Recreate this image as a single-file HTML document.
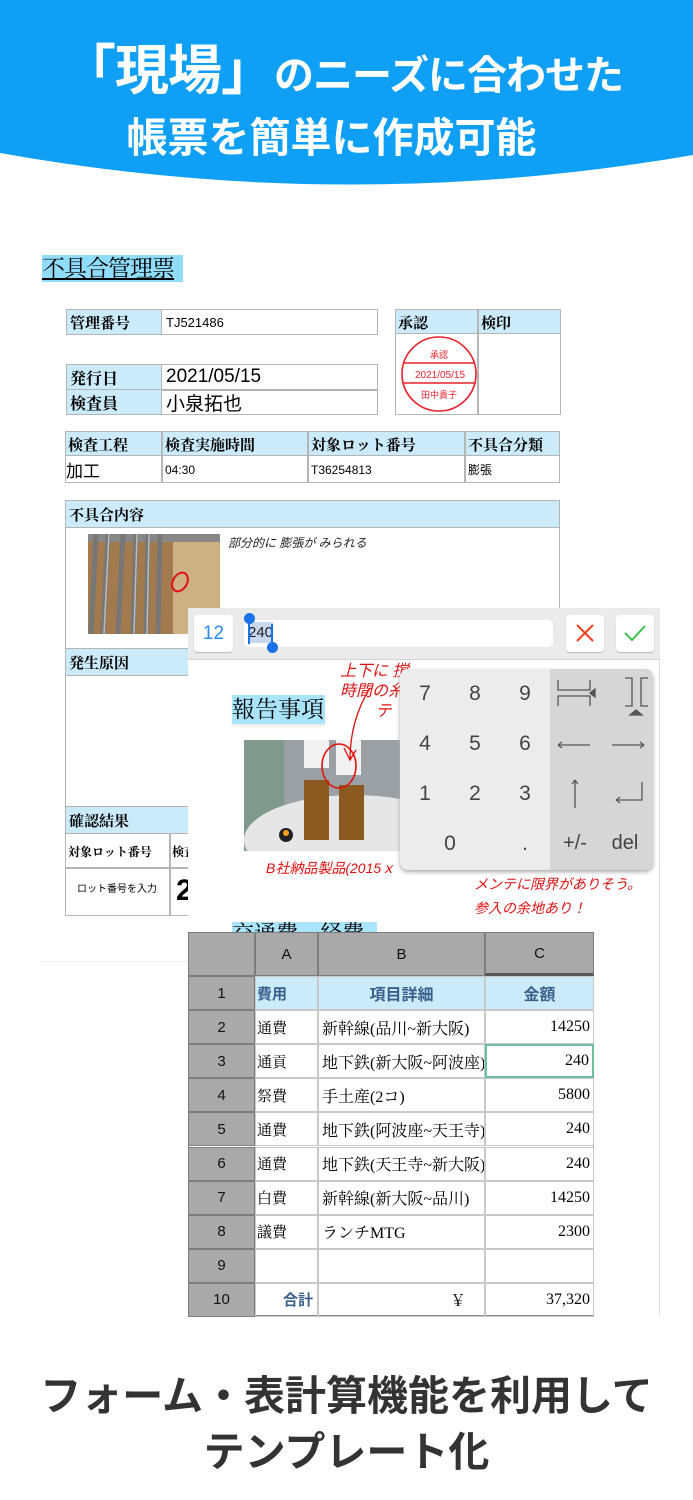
<!DOCTYPE html>
<html><head><meta charset="utf-8">
<style>
*{margin:0;padding:0;box-sizing:border-box}
body{width:693px;height:1500px;position:relative;background:#fff;overflow:hidden;font-family:"Liberation Sans","Noto Sans CJK JP",sans-serif}
.a{position:absolute}
.serif{font-family:"Liberation Serif","Noto Serif CJK SC",serif}
.hd{background:#cbebfb}
.b{border:1.5px solid #b5b5b5}
.c{position:absolute;display:flex;align-items:center;white-space:nowrap;overflow:hidden}
.k{position:absolute;width:50px;text-align:center;font-size:21px;color:#444}
.g{background:#a9a9a9;color:#111;border:1px solid #7d7d7d}
</style></head><body>
<svg class="a" style="left:0;top:0" width="693" height="200"><path d="M0 0H693V155Q346 215 0 153Z" fill="#0fa0f5"/></svg>
<div class="a" style="left:62px;top:26px;width:620px;color:#fff;font-weight:bold;white-space:nowrap;letter-spacing:-1px"><span style="font-size:54px">「現場」</span><span style="font-size:40px">のニーズに合わせた</span></div>
<div class="a" style="left:0;top:104px;width:693px;text-align:center;color:#fff;font-weight:bold;font-size:41px;padding-right:30px;white-space:nowrap">帳票を簡単に作成可能</div>

<div class="a serif" style="left:42px;top:255px;width:141px;height:27px;background:#8fdcfb;font-size:23px;line-height:27px;text-decoration:underline;white-space:nowrap;letter-spacing:-1px;overflow:hidden">不具合管理票</div>

<!-- table 1 -->
<div class="a b" style="left:66px;top:309px;width:312px;height:26px"></div>
<div class="c hd serif" style="left:67px;top:310px;width:95px;height:24px;font-weight:bold;font-size:15px;padding-left:3px;border-right:1.5px solid #b5b5b5">管理番号</div>
<div class="c" style="left:166px;top:310px;height:24px;font-size:13px">TJ521486</div>

<div class="a b" style="left:66px;top:364px;width:312px;height:51px"></div>
<div class="a" style="left:67px;top:389px;width:310px;height:1.5px;background:#b5b5b5"></div>
<div class="c hd serif" style="left:67px;top:365px;width:95px;height:24px;font-weight:bold;font-size:16px;padding-left:3px;border-right:1.5px solid #b5b5b5">発行日</div>
<div class="c hd serif" style="left:67px;top:390px;width:95px;height:24px;font-weight:bold;font-size:16px;padding-left:3px;border-right:1.5px solid #b5b5b5">検査員</div>
<div class="c" style="left:166px;top:365px;height:24px;font-size:19px">2021/05/15</div>
<div class="c" style="left:166px;top:390px;height:24px;font-size:19px">小泉拓也</div>

<div class="a b" style="left:395px;top:309px;width:166px;height:106px"></div>
<div class="a hd" style="left:396px;top:310px;width:164px;height:24px;border-bottom:1.5px solid #b5b5b5"></div>
<div class="a" style="left:477px;top:310px;width:1.5px;height:104px;background:#b5b5b5"></div>
<div class="c serif" style="left:398px;top:310px;height:24px;font-weight:bold;font-size:15px">承認</div>
<div class="c serif" style="left:481px;top:310px;height:24px;font-weight:bold;font-size:15px">検印</div>
<svg class="a" style="left:400px;top:336px" width="80" height="78"><ellipse cx="39" cy="38" rx="37" ry="37" fill="none" stroke="#e8202a" stroke-width="1.6"/><line x1="4" y1="27" x2="75" y2="27" stroke="#e8202a" stroke-width="1.4"/><line x1="3" y1="47" x2="75" y2="47" stroke="#e8202a" stroke-width="1.4"/><text x="39" y="22" font-size="9" fill="#e8202a" text-anchor="middle" font-family="Noto Sans CJK JP">承認</text><text x="40" y="42" font-size="10" fill="#e8202a" text-anchor="middle" font-family="Liberation Sans">2021/05/15</text><text x="39" y="62" font-size="9" fill="#e8202a" text-anchor="middle" font-family="Noto Sans CJK JP">田中貴子</text></svg>

<!-- table 3 -->
<div class="a b" style="left:65px;top:431px;width:495px;height:52px"></div>
<div class="a hd" style="left:66px;top:432px;width:493px;height:24px;border-bottom:1.5px solid #b5b5b5"></div>
<div class="a" style="left:161px;top:432px;width:1.5px;height:50px;background:#b5b5b5"></div>
<div class="a" style="left:307px;top:432px;width:1.5px;height:50px;background:#b5b5b5"></div>
<div class="a" style="left:464px;top:432px;width:1.5px;height:50px;background:#b5b5b5"></div>
<div class="c serif" style="left:68px;top:432px;height:24px;font-weight:bold;font-size:15px">検査工程</div>
<div class="c serif" style="left:165px;top:432px;height:24px;font-weight:bold;font-size:15px">検査実施時間</div>
<div class="c serif" style="left:311px;top:432px;height:24px;font-weight:bold;font-size:15px">対象ロット番号</div>
<div class="c serif" style="left:468px;top:432px;height:24px;font-weight:bold;font-size:15px">不具合分類</div>
<div class="c" style="left:66px;top:457px;height:25px;font-size:17px">加工</div>
<div class="c" style="left:165px;top:457px;height:25px;font-size:12px">04:30</div>
<div class="c" style="left:311px;top:457px;height:25px;font-size:12px">T36254813</div>
<div class="c" style="left:468px;top:457px;height:25px;font-size:12px">膨張</div>

<!-- 不具合内容 -->
<div class="a b" style="left:65px;top:500px;width:495px;height:416px"></div>
<div class="c hd serif" style="left:66px;top:501px;width:493px;height:27px;border-bottom:1.5px solid #b5b5b5;font-weight:bold;font-size:15px;padding-left:3px">不具合内容</div>
<svg class="a" style="left:88px;top:534px" width="132" height="100"><rect width="132" height="100" fill="#a27a4e"/><rect x="85" y="0" width="47" height="100" fill="#cdb184"/><rect x="0" y="0" width="132" height="8" fill="#888"/><g stroke="#777" stroke-width="5"><line x1="20" y1="0" x2="15" y2="100"/><line x1="35" y1="0" x2="30" y2="100"/><line x1="48" y1="0" x2="45" y2="100"/><line x1="60" y1="0" x2="58" y2="100"/><line x1="72" y1="0" x2="70" y2="100"/><line x1="8" y1="0" x2="3" y2="100"/></g><g stroke="#bbb" stroke-width="1.5"><line x1="21" y1="0" x2="16" y2="100"/><line x1="49" y1="0" x2="46" y2="100"/><line x1="61" y1="0" x2="59" y2="100"/></g><ellipse cx="92" cy="48" rx="7" ry="10" fill="none" stroke="#e01010" stroke-width="2" transform="rotate(30 92 48)"/></svg>
<div class="a" style="left:228px;top:534px;font-size:12px;color:#222;font-style:italic">部分的に 膨張が みられる</div>
<div class="c hd serif" style="left:66px;top:648px;width:130px;height:28px;border-top:1.5px solid #b5b5b5;border-bottom:1.5px solid #b5b5b5;font-weight:bold;font-size:15px;padding-left:3px">発生原因</div>
<div class="c hd serif" style="left:66px;top:806px;width:130px;height:28px;border-top:1.5px solid #b5b5b5;border-bottom:1.5px solid #b5b5b5;font-weight:bold;font-size:15px;padding-left:3px">確認結果</div>
<div class="a" style="left:66px;top:867px;width:130px;height:1.5px;background:#b5b5b5"></div>
<div class="a" style="left:169px;top:834px;width:1.5px;height:81px;background:#b5b5b5"></div>
<div class="c serif" style="left:68px;top:835px;height:32px;font-weight:bold;font-size:12px">対象ロット番号</div>
<div class="c serif" style="left:172px;top:835px;height:32px;font-weight:bold;font-size:12px">検査</div>
<div class="a" style="left:77px;top:880px;font-size:10px">ロット番号を入力</div>
<div class="a" style="left:176px;top:874px;font-size:30px;font-weight:bold">2</div>
<div class="a" style="left:40px;top:961px;width:150px;height:1px;background:#eee"></div>

<!-- overlay panel -->
<div class="a" style="left:188px;top:608px;width:472px;height:708px;background:#fff;border-right:1px solid #ddd"></div>
<div class="a" style="left:188px;top:608px;width:472px;height:52px;background:#ebebeb;border-bottom:1px solid #d4d4d4"></div>
<div class="a" style="left:194px;top:615px;width:39px;height:37px;background:#fff;border-radius:4px;box-shadow:0 1px 1px #bbb;color:#2a8cf0;font-size:19px;text-align:center;line-height:37px">12</div>
<div class="a" style="left:244px;top:620px;width:309px;height:27px;background:#fff;border-radius:5px"></div>
<div class="a" style="left:248px;top:622px;width:25px;height:21px;background:#c6d8ee"></div>
<div class="a" style="left:248px;top:624px;font-size:15px;color:#222">240</div>
<div class="a" style="left:248px;top:620px;width:2px;height:24px;background:#1a73e8"></div>
<div class="a" style="left:271px;top:624px;width:2px;height:24px;background:#1a73e8"></div>
<div class="a" style="left:244px;top:613px;width:11px;height:11px;border-radius:50%;background:#1a73e8"></div>
<div class="a" style="left:267px;top:642px;width:11px;height:11px;border-radius:50%;background:#1a73e8"></div>
<div class="a" style="left:566px;top:615px;width:38px;height:37px;background:#fff;border-radius:4px;box-shadow:0 1px 1px #bbb"></div>
<svg class="a" style="left:576px;top:624px" width="18" height="18"><path d="M1 1L17 17M17 1L1 17" stroke="#f04020" stroke-width="2"/></svg>
<div class="a" style="left:616px;top:615px;width:38px;height:37px;background:#fff;border-radius:4px;box-shadow:0 1px 1px #bbb"></div>
<svg class="a" style="left:624px;top:625px" width="22" height="16"><path d="M1 8L8 15L21 1" stroke="#3cc24a" stroke-width="2" fill="none"/></svg>

<div class="a serif" style="left:232px;top:695px;width:93px;height:29px;background:#a9e4fb;font-size:23px;line-height:29px;box-shadow:0 3px 3px #eee;white-space:nowrap">報告事項</div>
<svg class="a" style="left:244px;top:740px" width="158" height="111"><rect width="158" height="111" fill="#9aa0a3"/><rect x="0" y="0" width="40" height="111" fill="#7f9a8c"/><ellipse cx="110" cy="100" rx="110" ry="45" fill="#e6e6e6"/><rect x="60" y="40" width="25" height="60" fill="#8a5a20"/><rect x="95" y="45" width="25" height="55" fill="#8a5a20"/><rect x="60" y="0" width="25" height="28" fill="#f2f2f2"/><rect x="92" y="0" width="25" height="35" fill="#f2f2f2"/><ellipse cx="95" cy="26" rx="17" ry="22" fill="none" stroke="#e01010" stroke-width="1.6"/><circle cx="42" cy="95" r="7" fill="#222"/><circle cx="42" cy="93" r="3" fill="#f3a020"/></svg>
<svg class="a" style="left:330px;top:660px" width="80" height="110"><path d="M40 28Q20 60 20 100" stroke="#e01010" stroke-width="1.3" fill="none"/><path d="M14 88L20 100L26 90" stroke="#e01010" stroke-width="1.3" fill="none"/></svg>
<div class="a" style="left:340px;top:662px;color:#e01010;font-size:16px;font-style:italic;line-height:20px">上下に 撹<br>時間の糸<br>&nbsp;&nbsp;&nbsp;&nbsp;&nbsp;&nbsp;&nbsp;&nbsp;テ</div>
<div class="a" style="left:266px;top:858px;color:#e01010;font-size:14px;font-style:italic">B社納品製品(2015ｘ</div>
<div class="a" style="left:474px;top:872px;color:#e01010;font-size:14px;font-style:italic;line-height:24px">メンテに限界がありそう。<br>参入の余地あり！</div>
<div class="a serif" style="left:232px;top:922px;width:145px;height:12px;background:#a9e4fb;overflow:hidden;font-size:22px;line-height:24px;white-space:nowrap">交通費　経費</div>

<!-- keypad -->
<div class="a" style="left:400px;top:669px;width:253px;height:201px;background:#ececec;border-radius:8px;box-shadow:0 2px 4px #aaa;overflow:hidden"><div class="a" style="left:150px;top:0;width:103px;height:201px;background:#d6d6d6"></div></div>
<div class="k" style="left:400px;top:682px">7</div><div class="k" style="left:450px;top:682px">8</div><div class="k" style="left:500px;top:682px">9</div>
<div class="k" style="left:400px;top:732px">4</div><div class="k" style="left:450px;top:732px">5</div><div class="k" style="left:500px;top:732px">6</div>
<div class="k" style="left:400px;top:782px">1</div><div class="k" style="left:450px;top:782px">2</div><div class="k" style="left:500px;top:782px">3</div>
<div class="k" style="left:425px;top:832px">0</div><div class="k" style="left:500px;top:832px">.</div>
<div class="k" style="left:550px;top:832px;font-size:20px">+/-</div><div class="k" style="left:600px;top:832px;font-size:20px">del</div>
<svg class="a" style="left:550px;top:670px" width="103" height="200" stroke="#555" stroke-width="1.3" fill="none"><path d="M8 10V20H40V10M8 36V26H40V36"/><path d="M40 23l5-4v8z" fill="#555"/><path d="M75 8H82V36H75M98 8H91V36H98"/><path d="M80 45l6-5 6 5z" fill="#555"/><path d="M8 75H40M8 75l4-3M8 75l4 3M62 75H94M94 75l-4-3M94 75l-4 3"/><path d="M25 110V138M25 110l-3 4M25 110l3 4"/><path d="M92 112V130H66M66 130l4-3M66 130l4 3"/></svg>

<!-- spreadsheet -->
<div class="a" style="left:188px;top:932px;width:406px;height:384px;background:#fff;border:1px solid #8a8a8a"></div>
<div class="c g" style="left:188px;top:932px;width:67px;height:44px"></div>
<div class="c g" style="left:255px;top:932px;width:63px;height:44px;justify-content:center;font-size:15px">A</div>
<div class="c g" style="left:318px;top:932px;width:167px;height:44px;justify-content:center;font-size:15px">B</div>
<div class="c g" style="left:485px;top:932px;width:109px;height:44px;justify-content:center;font-size:15px;border-bottom:3px solid #555">C</div>
<div id="rows"></div>

<div class="a" style="left:0;top:1368px;width:693px;text-align:center;font-weight:bold;font-size:41px;color:#333;line-height:56px;white-space:nowrap">フォーム・表計算機能を利用して<br>テンプレート化</div>

<script>
var d=[["1","費用","項目詳細","金額",1],["2","通費","新幹線(品川~新大阪)","14250"],["3","通貢","地下鉄(新大阪~阿波座)","240"],["4","祭費","手土産(2コ)","5800"],["5","通費","地下鉄(阿波座~天王寺)","240"],["6","通費","地下鉄(天王寺~新大阪)","240"],["7","白費","新幹線(新大阪~品川)","14250"],["8","議費","ランチMTG","2300"],["9","","",""],["10","合計","￥","37,320",2]];
var h="";
d.forEach(function(r,i){var t=976+i*34.1;var hd=r[4]==1;var bg=hd?"background:#cbebfb;":"";
h+='<div class="c g" style="left:188px;top:'+t+'px;width:67px;height:34px;justify-content:center;font-size:15px">'+r[0]+'</div>';
var fA=hd?'font-family:Liberation Sans,Noto Sans CJK JP,sans-serif;font-weight:bold;color:#3a5f8a;':'';
h+='<div class="c serif" style="'+bg+'left:255px;top:'+t+'px;width:63px;height:34px;border:1px solid #c8c8c8;font-size:15px;'+fA+(r[4]==2?'justify-content:flex-end;padding-right:4px;font-family:Noto Sans CJK JP;font-weight:bold;color:#3a5f8a;':'padding-left:1px;')+'">'+r[1]+'</div>';
h+='<div class="c serif" style="'+bg+'left:318px;top:'+t+'px;width:167px;height:34px;border:1px solid #c8c8c8;font-size:16px;'+fA+(hd?'justify-content:center;':r[4]==2?'justify-content:flex-end;padding-right:18px;':'padding-left:3px;')+'">'+r[2]+'</div>';
h+='<div class="c serif" style="'+bg+'left:485px;top:'+t+'px;width:109px;height:34px;border:'+(i==2?'2px solid #6cc09a':'1px solid #c8c8c8')+';font-size:16px;'+fA+(hd?'justify-content:center;':'justify-content:flex-end;padding-right:3px;')+'">'+r[3]+'</div>';});
document.getElementById("rows").outerHTML=h;
</script>
</body></html>
